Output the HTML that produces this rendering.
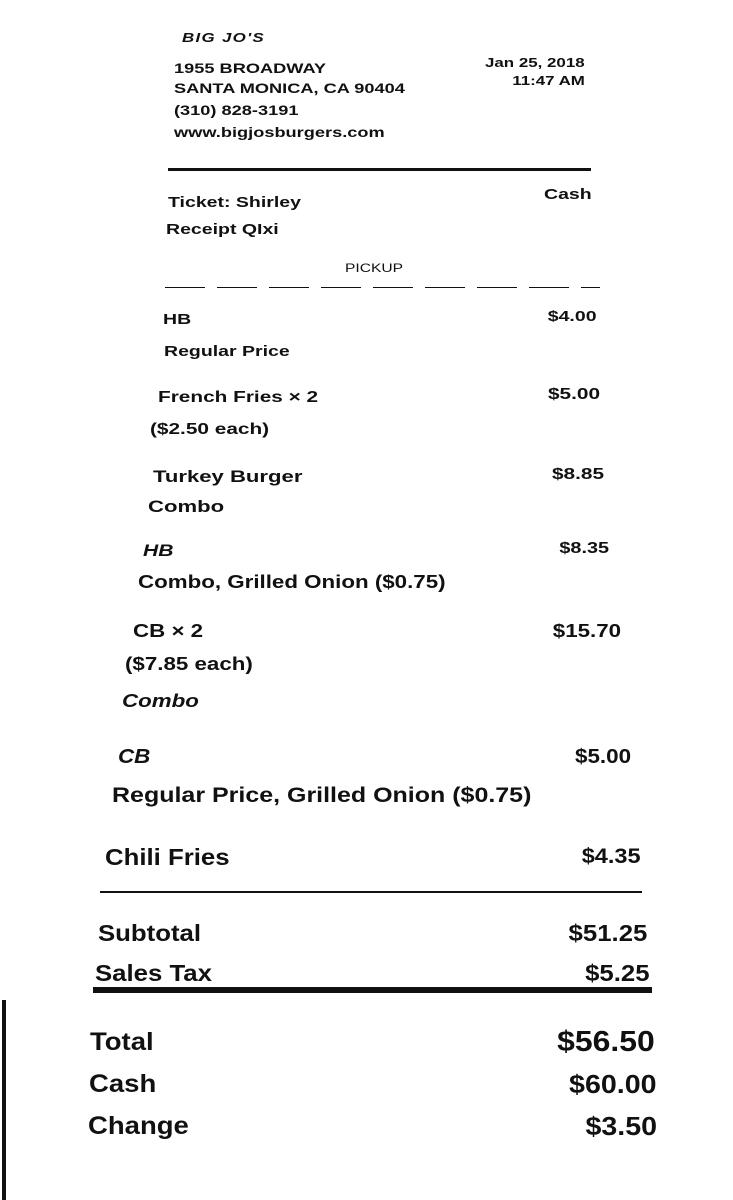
<!DOCTYPE html>
<html><head><meta charset="utf-8"><style>
html,body{margin:0;padding:0;background:#fff;}
body{width:733px;height:1200px;position:relative;overflow:hidden;font-family:"Liberation Sans",sans-serif;color:#111;}
.t{position:absolute;white-space:nowrap;line-height:1;font-weight:bold;transform-origin:left center;}
.r{transform-origin:right center;}
.h{transform:scaleX(1.3);}
.a{transform:scaleX(1.3);}
.c{transform:scaleX(1.24);}
.d{transform:scaleX(1.12);}
.e{transform:scaleX(1.1);}
.l{position:absolute;background:#111;}
</style></head><body>
<div class="t h" style="left:182px;top:31px;font-size:13px;letter-spacing:1px;font-style:italic">BIG JO'S</div>
<div class="t h" style="left:174px;top:61px;font-size:14px">1955 BROADWAY</div>
<div class="t h" style="left:174px;top:81px;font-size:14px">SANTA MONICA, CA 90404</div>
<div class="t h" style="left:174px;top:103px;font-size:14px">(310) 828-3191</div>
<div class="t h" style="left:174px;top:125px;font-size:14px">www.bigjosburgers.com</div>
<div class="t h r" style="right:148px;top:56px;font-size:13px">Jan 25, 2018</div>
<div class="t h r" style="right:148px;top:74px;font-size:13px">11:47 AM</div>
<div class="l" style="left:168px;top:168px;width:423px;height:3px"></div>
<div class="t a" style="left:168px;top:195px;font-size:15px">Ticket: Shirley</div>
<div class="t a" style="left:166px;top:222px;font-size:15px">Receipt QIxi</div>
<div class="t a r" style="right:141px;top:187px;font-size:15px">Cash</div>
<div class="t a" style="left:345px;top:262px;font-size:12px;font-weight:normal">PICKUP</div>
<div class="l" style="left:165px;top:287px;width:435px;height:1px;background:repeating-linear-gradient(90deg,#111 0 40px,transparent 40px 52px)"></div>
<div class="t a" style="left:163px;top:312px;font-size:15px">HB</div>
<div class="t a r" style="right:136px;top:309px;font-size:15px">$4.00</div>
<div class="t a" style="left:164px;top:344px;font-size:15px">Regular Price</div>
<div class="t a" style="left:158px;top:390px;font-size:16px">French Fries × 2</div>
<div class="t a r" style="right:133px;top:387px;font-size:16px">$5.00</div>
<div class="t a" style="left:150px;top:422px;font-size:16px">($2.50 each)</div>
<div class="t a" style="left:153px;top:468px;font-size:17px">Turkey Burger</div>
<div class="t a r" style="right:129px;top:467px;font-size:16px">$8.85</div>
<div class="t a" style="left:148px;top:498px;font-size:17px">Combo</div>
<div class="t c" style="left:143px;top:542px;font-size:17px;font-style:italic">HB</div>
<div class="t c r" style="right:124px;top:541px;font-size:16px">$8.35</div>
<div class="t c" style="left:138px;top:573px;font-size:18px">Combo, Grilled Onion ($0.75)</div>
<div class="t c" style="left:133px;top:622px;font-size:18px">CB × 2</div>
<div class="t c r" style="right:112px;top:622px;font-size:18px">$15.70</div>
<div class="t c" style="left:125px;top:655px;font-size:18px">($7.85 each)</div>
<div class="t c" style="left:122px;top:692px;font-size:18px;font-style:italic">Combo</div>
<div class="t d" style="left:118px;top:747px;font-size:20px;font-style:italic">CB</div>
<div class="t d r" style="right:102px;top:747px;font-size:20px">$5.00</div>
<div class="t" style="left:112px;top:785px;font-size:21px;transform:scaleX(1.19)">Regular Price, Grilled Onion ($0.75)</div>
<div class="t d" style="left:105px;top:846px;font-size:23px">Chili Fries</div>
<div class="t d r" style="right:92px;top:846px;font-size:21px">$4.35</div>
<div class="l" style="left:100px;top:891px;width:542px;height:2px"></div>
<div class="t d" style="left:98px;top:922px;font-size:23px">Subtotal</div>
<div class="t d r" style="right:86px;top:922px;font-size:23px">$51.25</div>
<div class="t d" style="left:95px;top:962px;font-size:23px">Sales Tax</div>
<div class="t d r" style="right:83px;top:962px;font-size:23px">$5.25</div>
<div class="l" style="left:93px;top:987px;width:559px;height:6px"></div>
<div class="t e" style="left:90px;top:1030px;font-size:25px">Total</div>
<div class="t e r" style="right:78px;top:1028px;font-size:29px">$56.50</div>
<div class="t e" style="left:89px;top:1072px;font-size:25px">Cash</div>
<div class="t e r" style="right:76px;top:1071px;font-size:26px">$60.00</div>
<div class="t e" style="left:88px;top:1114px;font-size:25px">Change</div>
<div class="t e r" style="right:76px;top:1113px;font-size:26px">$3.50</div>
<div class="l" style="left:2px;top:1000px;width:4px;height:200px"></div>
</body></html>
